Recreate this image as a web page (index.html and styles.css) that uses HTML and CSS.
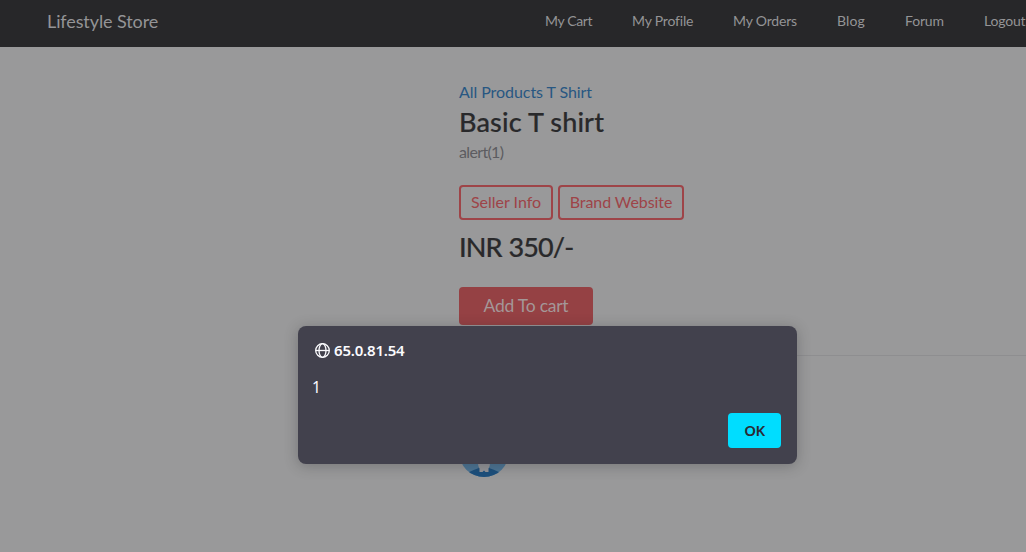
FILE: index.html
```
<!DOCTYPE html>
<html lang="en">
<head>
<meta charset="utf-8">
<title>Lifestyle Store</title>
<link rel="stylesheet" href="styles.css">
</head>
<body>
<header class="navbar">
  <a class="brand">Lifestyle Store</a>
  <nav class="menu">
    <a class="m-cart">My Cart</a><a class="m-profile">My Profile</a><a class="m-orders">My Orders</a><a class="m-blog">Blog</a><a class="m-forum">Forum</a><a class="m-logout">Logout</a>
  </nav>
</header>
<main class="product">
  <div class="crumbs"><span>All Products T Shirt</span></div>
  <h1 class="name"><span>Basic T shirt</span></h1>
  <p class="description"><span>alert(1)</span></p>
  <div class="links">
    <a class="outline seller"><span>Seller Info</span></a>
    <a class="outline website"><span>Brand Website</span></a>
  </div>
  <h2 class="price"><span>INR 350/-</span></h2>
  <a class="add"><span>Add To cart</span></a>
  <hr class="rule">
  <svg class="avatar" width="50" height="50" viewBox="0 0 50 50">
    <defs><clipPath id="disc"><circle cx="25" cy="25" r="25"/></clipPath></defs>
    <g clip-path="url(#disc)">
      <rect width="50" height="50" fill="#4c7595"/>
      <path d="M8 50V46Q14 43 20 41H30Q36 43 42 46V50Z" fill="#1c4f7c"/>
      <path d="M19 36H31Q31 40 29.500 41.500V45H26.500L25 43.500L23.500 45H20.500V41.500Q19 40 19 36Z" fill="#949599"/>
    </g>
  </svg>
</main>
<section class="dialog">
  <div class="origin">
    <svg width="16" height="16" viewBox="0 0 16 16" fill="none" stroke="#fbfbfe" stroke-width="1.300">
      <circle cx="8.500" cy="8.500" r="6.800"/><ellipse cx="8.500" cy="8.500" rx="3.500" ry="6.800"/><path d="M1.700 8.500H15.300"/>
    </svg>
    <strong>65.0.81.54</strong>
  </div>
  <p class="message">1</p>
  <div class="actions"><button class="ok">OK</button></div>
</section>
</body>
</html>
```
FILE: styles.css
```
* { box-sizing: border-box; }
html, body { margin: 0; height: 552px; overflow: hidden; }
body { position: relative; background: #99999a; font-family: Lato, "Open Sans", sans-serif; }
.navbar { height: 47px; background: #272729; color: #949496; display: flex; padding-left: 47px; line-height: 43px; white-space: nowrap; }
.brand { width: 498px; flex: none; font-size: 18px; letter-spacing: -0.1px; }
.menu { display: flex; gap: 40px; font-size: 14px; line-height: 42px; letter-spacing: -0.18px; }
.menu a { flex: none; }
.m-cart { width: 47px; letter-spacing: -0.35px; }
.m-profile { width: 61px; }
.m-orders { width: 64px; }
.m-blog { width: 28px; letter-spacing: 0.1px; }
.m-forum { width: 39px; }
.product { padding: 34px 0 0 459px; display: flex; flex-direction: column; align-items: flex-start; white-space: nowrap; }
.crumbs { height: 24px; line-height: 22px; font-size: 16px; letter-spacing: -0.06px; color: #285782; }
.name { margin: 0; height: 36px; line-height: 33px; font-size: 27px; font-weight: 500; letter-spacing: 0.15px; color: #29292b; -webkit-text-stroke: 0.2px #29292b; }
.description { margin: 0; height: 44px; line-height: 22px; font-size: 16px; letter-spacing: -0.65px; color: #5c5c60; }
.links { display: flex; gap: 5px; }
.outline { height: 35px; border: 2px solid #9e4448; border-radius: 4px; display: flex; justify-content: center; font-size: 16px; line-height: 30px; color: #9e4448; }
.seller { width: 94px; }
.website { width: 126px; letter-spacing: -0.08px; }
.price { margin: 9px 0 0; height: 58px; line-height: 35px; font-size: 27px; font-weight: 500; letter-spacing: -0.9px; word-spacing: 1px; color: #29292b; -webkit-text-stroke: 0.2px #29292b; }
.add { width: 134px; height: 38px; background: #954144; border-radius: 4px; color: #a49798; font-size: 17.500px; letter-spacing: -0.25px; line-height: 37px; text-align: center; }
.rule { width: 567px; border: 0; height: 1px; margin: 30px 0 71px; background: #8e8e90; }
.dialog { position: absolute; left: 298px; top: 326px; width: 499px; height: 138px; padding: 15px 16px; border-radius: 8px; background: #42414d; color: #fbfbfe; box-shadow: 0 2px 14px rgba(35,35,40,.3); font-family: "Noto Sans", sans-serif; }
.origin { display: flex; align-items: center; gap: 4px; height: 18px; font-size: 15px; }
.origin strong { font-weight: 600; letter-spacing: -0.2px; }
.message { margin: 18px 0 0 -2px; height: 20px; line-height: 21px; font-size: 15.500px; }
.actions { display: flex; justify-content: flex-end; margin-top: 16px; }
.ok { width: 53px; height: 35px; padding: 0 0 1px; border: 0; border-radius: 4px; background: #00ddff; color: #2b2a33; font: 600 15px "Noto Sans", sans-serif; letter-spacing: -0.5px; }
```
